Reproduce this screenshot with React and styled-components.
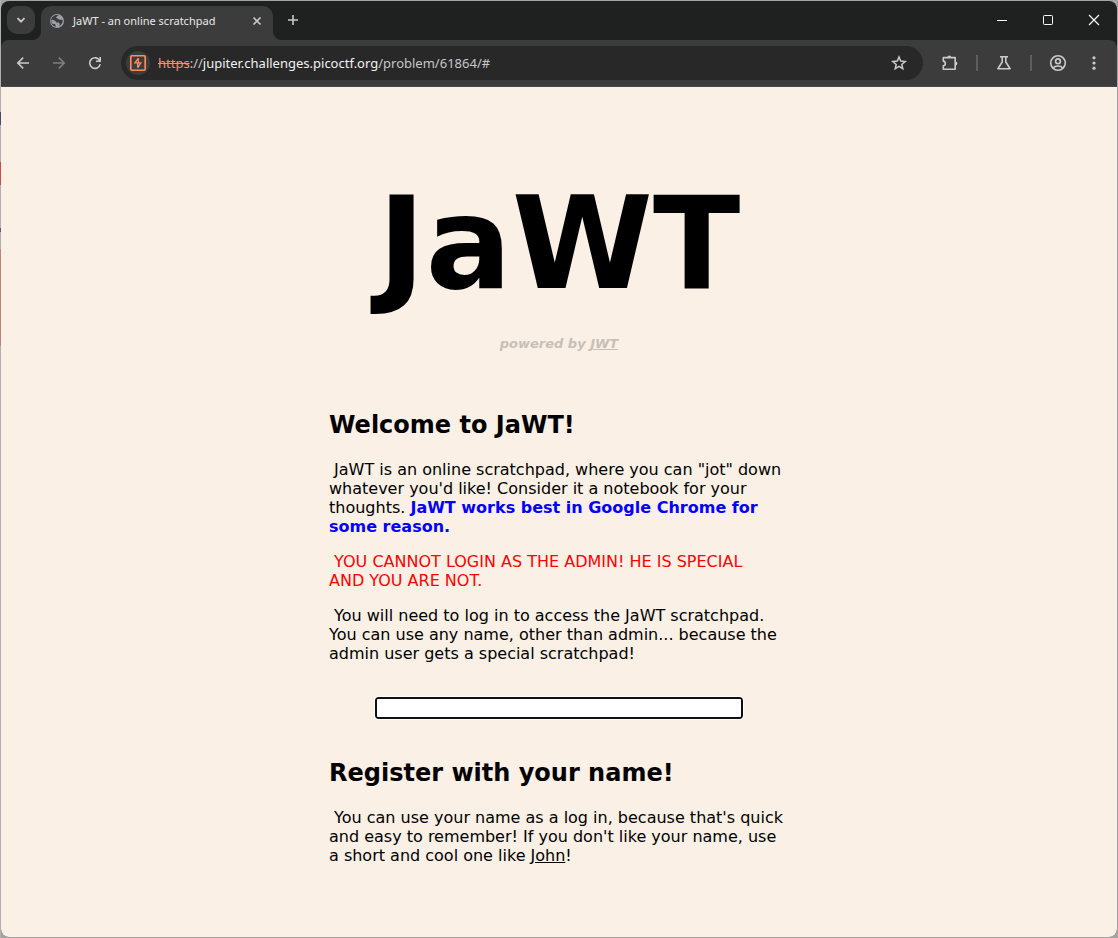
import React from "react";
import styled, { createGlobalStyle, css } from "styled-components";

const GlobalStyle = createGlobalStyle`
  * { box-sizing: border-box; }
  html, body { margin: 0; }
  body { background: #a2a4a4; }
  button { font: inherit; color: inherit; }
`;

/* A thin strip of whatever lies behind the window shows along its left edge. */
const Desktop = styled.div`
  min-height: 100vh;
  padding: 1px;
  display: flex;
  background: linear-gradient(
    #b0b0b0 0 112px, #4a4a68 112px 125px, #b0b0b0 125px 162px,
    #d04a50 162px 185px, #b0b0b0 185px 228px, #5a5a70 228px 232px,
    #b0b0b0 232px 249px, #bd8478 249px 346px, #b0b0b0 346px
  ) left / 1px 100% no-repeat, #a2a4a4;
`;

const Window = styled.div`
  flex: 1;
  min-width: 0;
  display: flex;
  flex-direction: column;
  overflow: hidden;
  border-radius: 8px;
  background: #1f2120;
`;

const TabStrip = styled.header`
  display: flex;
  height: 39px;
  padding-left: 6px;
  color: #e8e8e8;
  font-family: "Noto Sans", "Open Sans", sans-serif;
`;

const IconButton = styled.button`
  display: flex;
  flex: none;
  align-items: center;
  justify-content: center;
  width: ${(p) => p.$width || 28}px;
  height: 28px;
  padding: 0;
  border: 0;
  background: none;
  color: ${(p) => (p.$dim ? "#7e7e7e" : "#c9cbca")};
`;

const TabSearch = styled(IconButton)`
  margin-top: 5px;
  border-radius: 10px;
  background: #3c3c3c;
`;

const flare = css`
  content: "";
  position: absolute;
  bottom: 0;
  width: 10px;
  height: 10px;
`;

const Tab = styled.div`
  position: relative;
  display: flex;
  align-items: center;
  width: 232px;
  height: 34px;
  margin: 5px 6px 0;
  padding: 0 2px 4px 8px;
  border-radius: 10px 10px 0 0;
  background: #3c3c3c;
  font-size: 11px;
  line-height: 16px;
  &::before {
    ${flare}
    right: 100%;
    background: radial-gradient(circle at 0 0, transparent 10px, #3c3c3c 11px);
  }
  &::after {
    ${flare}
    left: 100%;
    background: radial-gradient(circle at 100% 0, transparent 10px, #3c3c3c 11px);
  }
`;

const TabTitle = styled.span`
  flex: 1;
  margin-left: 8px;
  white-space: nowrap;
`;

const NewTab = styled(IconButton)`
  margin-top: 5px;
`;

const WindowControls = styled.div`
  display: flex;
  margin-left: auto;
  padding-top: 5px;
`;

const ControlButton = styled(IconButton)`
  color: #ffffff;
`;

const Toolbar = styled.nav`
  display: flex;
  align-items: center;
  height: 47px;
  padding: 0 9px 0 8px;
  border-bottom: 1px solid #484a4a;
  border-radius: 8px 8px 0 0;
  background: #3c3c3c;
`;

const Navigation = styled.div`
  display: flex;
  gap: 8px;
  margin-right: 12px;
`;

const AddressBar = styled.div`
  flex: 1;
  min-width: 0;
  display: flex;
  align-items: center;
  height: 34px;
  margin-right: 13px;
  padding: 0 10px 0 5px;
  border-radius: 17px;
  background: #282828;
`;

const SiteInfo = styled(IconButton)`
  height: 24px;
  border-radius: 12px;
  background: #3c3c3c;
  color: #ff8e62;
`;

const Address = styled.div`
  flex: 1;
  min-width: 0;
  margin-left: 8px;
  overflow: hidden;
  white-space: nowrap;
  color: #c7c7c7;
  font: 13px/20px "Noto Sans", "Open Sans", sans-serif;
`;

const Scheme = styled.s`
  color: #ff8e62;
`;

const Host = styled.span`
  color: #f1f1f1;
`;

const Divider = styled.span`
  flex: none;
  width: 2px;
  height: 16px;
  margin: 0 12px;
  background: #5e5e5e;
`;

const MenuButton = styled(IconButton)`
  margin-left: 8px;
`;

const Page = styled.main`
  flex: 1;
  padding: 79px 16px 40px;
  background: #faf0e6;
  color: #000000;
  font: 16px/19px Verdana, "DejaVu Sans", sans-serif;
`;

const Title = styled.h1`
  margin: 0;
  text-align: center;
  font-size: 128px;
  line-height: 156px;
`;

const Byline = styled.p`
  margin: 14px 0 59px;
  text-align: center;
  font-size: 13px;
  line-height: 16px;
  font-weight: bold;
  font-style: italic;
  color: #c8c0b8;
`;

const TextLink = styled.a`
  color: inherit;
  text-decoration: underline;
`;

const Content = styled.div`
  max-width: 460px;
  margin: 0 auto;
`;

const Heading = styled.h2`
  margin: 0 0 20px;
  font-size: 24px;
  line-height: 29px;
`;

const Paragraph = styled.p`
  margin: 0 0 16px;
  color: ${(p) => (p.$warning ? "#ff0000" : "inherit")};
`;

const Highlight = styled.strong`
  color: #0000ff;
`;

const LoginForm = styled.form`
  display: flex;
  justify-content: center;
  padding: 18px 0 40px;
`;

const NameInput = styled.input`
  width: 80%;
  height: 22px;
  padding: 0 4px;
  border: 2px solid #101010;
  border-radius: 3px;
  outline: 1px solid #ffffff;
  background: #ffffff;
  font: 13px "Liberation Sans", sans-serif;
`;

function Icon({ size = 16, children, ...rest }) {
  return (
    <svg
      width={size}
      height={size}
      viewBox={`0 0 ${size} ${size}`}
      fill="none"
      stroke="currentColor"
      strokeWidth="1.6"
      aria-hidden="true"
      {...rest}
    >
      {children}
    </svg>
  );
}

function BrowserTabs() {
  return (
    <TabStrip>
      <TabSearch aria-label="Search tabs">
        <Icon><path d="M4.5 6.2 8 9.7l3.5-3.5" strokeWidth="1.8" /></Icon>
      </TabSearch>
      <Tab>
        <Icon stroke="none">
          <circle cx="8" cy="8" r="7" fill="#9aa0a6" />
          <path
            fill="#3c3c3c"
            d="M9.4 2.2C8.900 3 7.300 3.200 7.200 4.200c0 .9.5 1.100 1.400 1.200.7.1.8.8 1.400 1.200.8.5 2.600.1 3.700.5.3 2.500-1.200 4.800-3.600 6 .1-1.200.8-1.700.5-2.700-.3-1-1.500-.8-2.600-.9-1.300-.1-1.300-1.300-2.300-1.900C4.800 7 3.400 6.900 2.400 6.700 2.200 8.200 2.500 9.600 3.200 10.800c1 .2 2.300 0 3 .8.6.7.2 1.500.8 2.100-2.900-.4-5.200-2.800-5.200-5.700C1.800 4.600 4.600 1.900 8 1.900z"
          />
        </Icon>
        <TabTitle>JaWT - an online scratchpad</TabTitle>
        <IconButton aria-label="Close tab">
          <Icon><path d="m4.500 4.500 7 7m0-7-7 7" /></Icon>
        </IconButton>
      </Tab>
      <NewTab aria-label="New tab">
        <Icon><path d="M8 3v10M3 8h10" /></Icon>
      </NewTab>
      <WindowControls>
        <ControlButton $width={46} aria-label="Minimize">
          <Icon strokeWidth="1"><path d="M3 8.500h10" /></Icon>
        </ControlButton>
        <ControlButton $width={46} aria-label="Maximize">
          <Icon strokeWidth="1"><rect x="3.500" y="3.500" width="9" height="9" rx="1" /></Icon>
        </ControlButton>
        <ControlButton $width={46} aria-label="Close window">
          <Icon strokeWidth="1.100"><path d="m3 3 10 10M13 3 3 13" /></Icon>
        </ControlButton>
      </WindowControls>
    </TabStrip>
  );
}

function BrowserToolbar() {
  return (
    <Toolbar>
      <Navigation>
        <IconButton aria-label="Back">
          <Icon><path d="M14 8H3m5.200-5.400L2.800 8l5.400 5.400" /></Icon>
        </IconButton>
        <IconButton $dim aria-label="Forward">
          <Icon><path d="M2 8h11M7.800 2.600 13.200 8l-5.400 5.400" /></Icon>
        </IconButton>
        <IconButton aria-label="Reload">
          <Icon>
            <path d="M13.200 9.200A5.300 5.300 0 1 1 12.800 5.800M13.200 2v4.300H8.900" />
          </Icon>
        </IconButton>
      </Navigation>
      <AddressBar>
        <SiteInfo $width={24} aria-label="Site information">
          <Icon>
            <rect x="0.800" y="0.800" width="14.400" height="14.400" rx="1.200" />
            <path d="M8.400 3.200 5 7.900h5.800L7.600 12.800M8.400 3.400v4.400M7.600 8v4.400" strokeWidth="1.300" />
          </Icon>
        </SiteInfo>
        <Address>
          <Scheme>https</Scheme>://<Host>jupiter.challenges.picoctf.org</Host>/problem/61864/#
        </Address>
        <IconButton aria-label="Bookmark this tab">
          <Icon>
            <path d="m8 2 1.700 4.100 4.500.4-3.400 2.900 1 4.300L8 11.400l-3.800 2.300 1-4.300-3.400-2.900 4.500-.4z" strokeWidth="1.500" />
          </Icon>
        </IconButton>
      </AddressBar>
      <IconButton aria-label="Extensions">
        <Icon size={18}>
          <path d="M2.300 3.600h11.900v11.600H2.300v-3.500c2.700-.3 2.700-4.300 0-4.600z" strokeLinejoin="round" />
          <path d="M6.300 3.400a2 2 0 0 1 4 0zM14.400 7.400a2 2 0 0 1 0 4z" fill="currentColor" stroke="none" />
        </Icon>
      </IconButton>
      <Divider />
      <IconButton aria-label="Experiments">
        <Icon><path d="M4 1.800h8M6.200 2v5L1.900 13.800h12.200L9.800 7V2" strokeLinejoin="round" /></Icon>
      </IconButton>
      <Divider />
      <IconButton aria-label="Profile">
        <Icon size={18}>
          <circle cx="9" cy="9" r="7.300" />
          <circle cx="9" cy="7.300" r="2.400" />
          <path d="M3.900 14c2.700-2.600 7.500-2.600 10.200 0" />
        </Icon>
      </IconButton>
      <MenuButton aria-label="Menu">
        <Icon fill="currentColor" stroke="none">
          <circle cx="8" cy="2.800" r="1.600" />
          <circle cx="8" cy="8" r="1.600" />
          <circle cx="8" cy="13.200" r="1.600" />
        </Icon>
      </MenuButton>
    </Toolbar>
  );
}

export default function App() {
  return (
    <>
      <GlobalStyle />
      <Desktop>
        <Window>
          <BrowserTabs />
          <BrowserToolbar />
          <Page>
            <Title>JaWT</Title>
            <Byline>
              powered by <TextLink href="#jwt">JWT</TextLink>
            </Byline>
            <Content>
              <Heading>Welcome to JaWT!</Heading>
              <Paragraph>
                &nbsp;JaWT is an online scratchpad, where you can "jot" down
                whatever you'd like! Consider it a notebook for your thoughts.{" "}
                <Highlight>JaWT works best in Google Chrome for some reason.</Highlight>
              </Paragraph>
              <Paragraph $warning>
                &nbsp;YOU CANNOT LOGIN AS THE ADMIN! HE IS SPECIAL
                <br />
                AND YOU ARE NOT.
              </Paragraph>
              <Paragraph>
                &nbsp;You will need to log in to access the JaWT scratchpad. You can
                use any name, other than admin... because the admin user gets a
                special scratchpad!
              </Paragraph>
              <LoginForm>
                <NameInput type="text" name="user" aria-label="Name" />
              </LoginForm>
              <Heading>Register with your name!</Heading>
              <Paragraph>
                &nbsp;You can use your name as a log in, because that's quick and
                easy to remember! If you don't like your name, use a short and cool
                one like <TextLink href="#john">John</TextLink>!
              </Paragraph>
            </Content>
          </Page>
        </Window>
      </Desktop>
    </>
  );
}
